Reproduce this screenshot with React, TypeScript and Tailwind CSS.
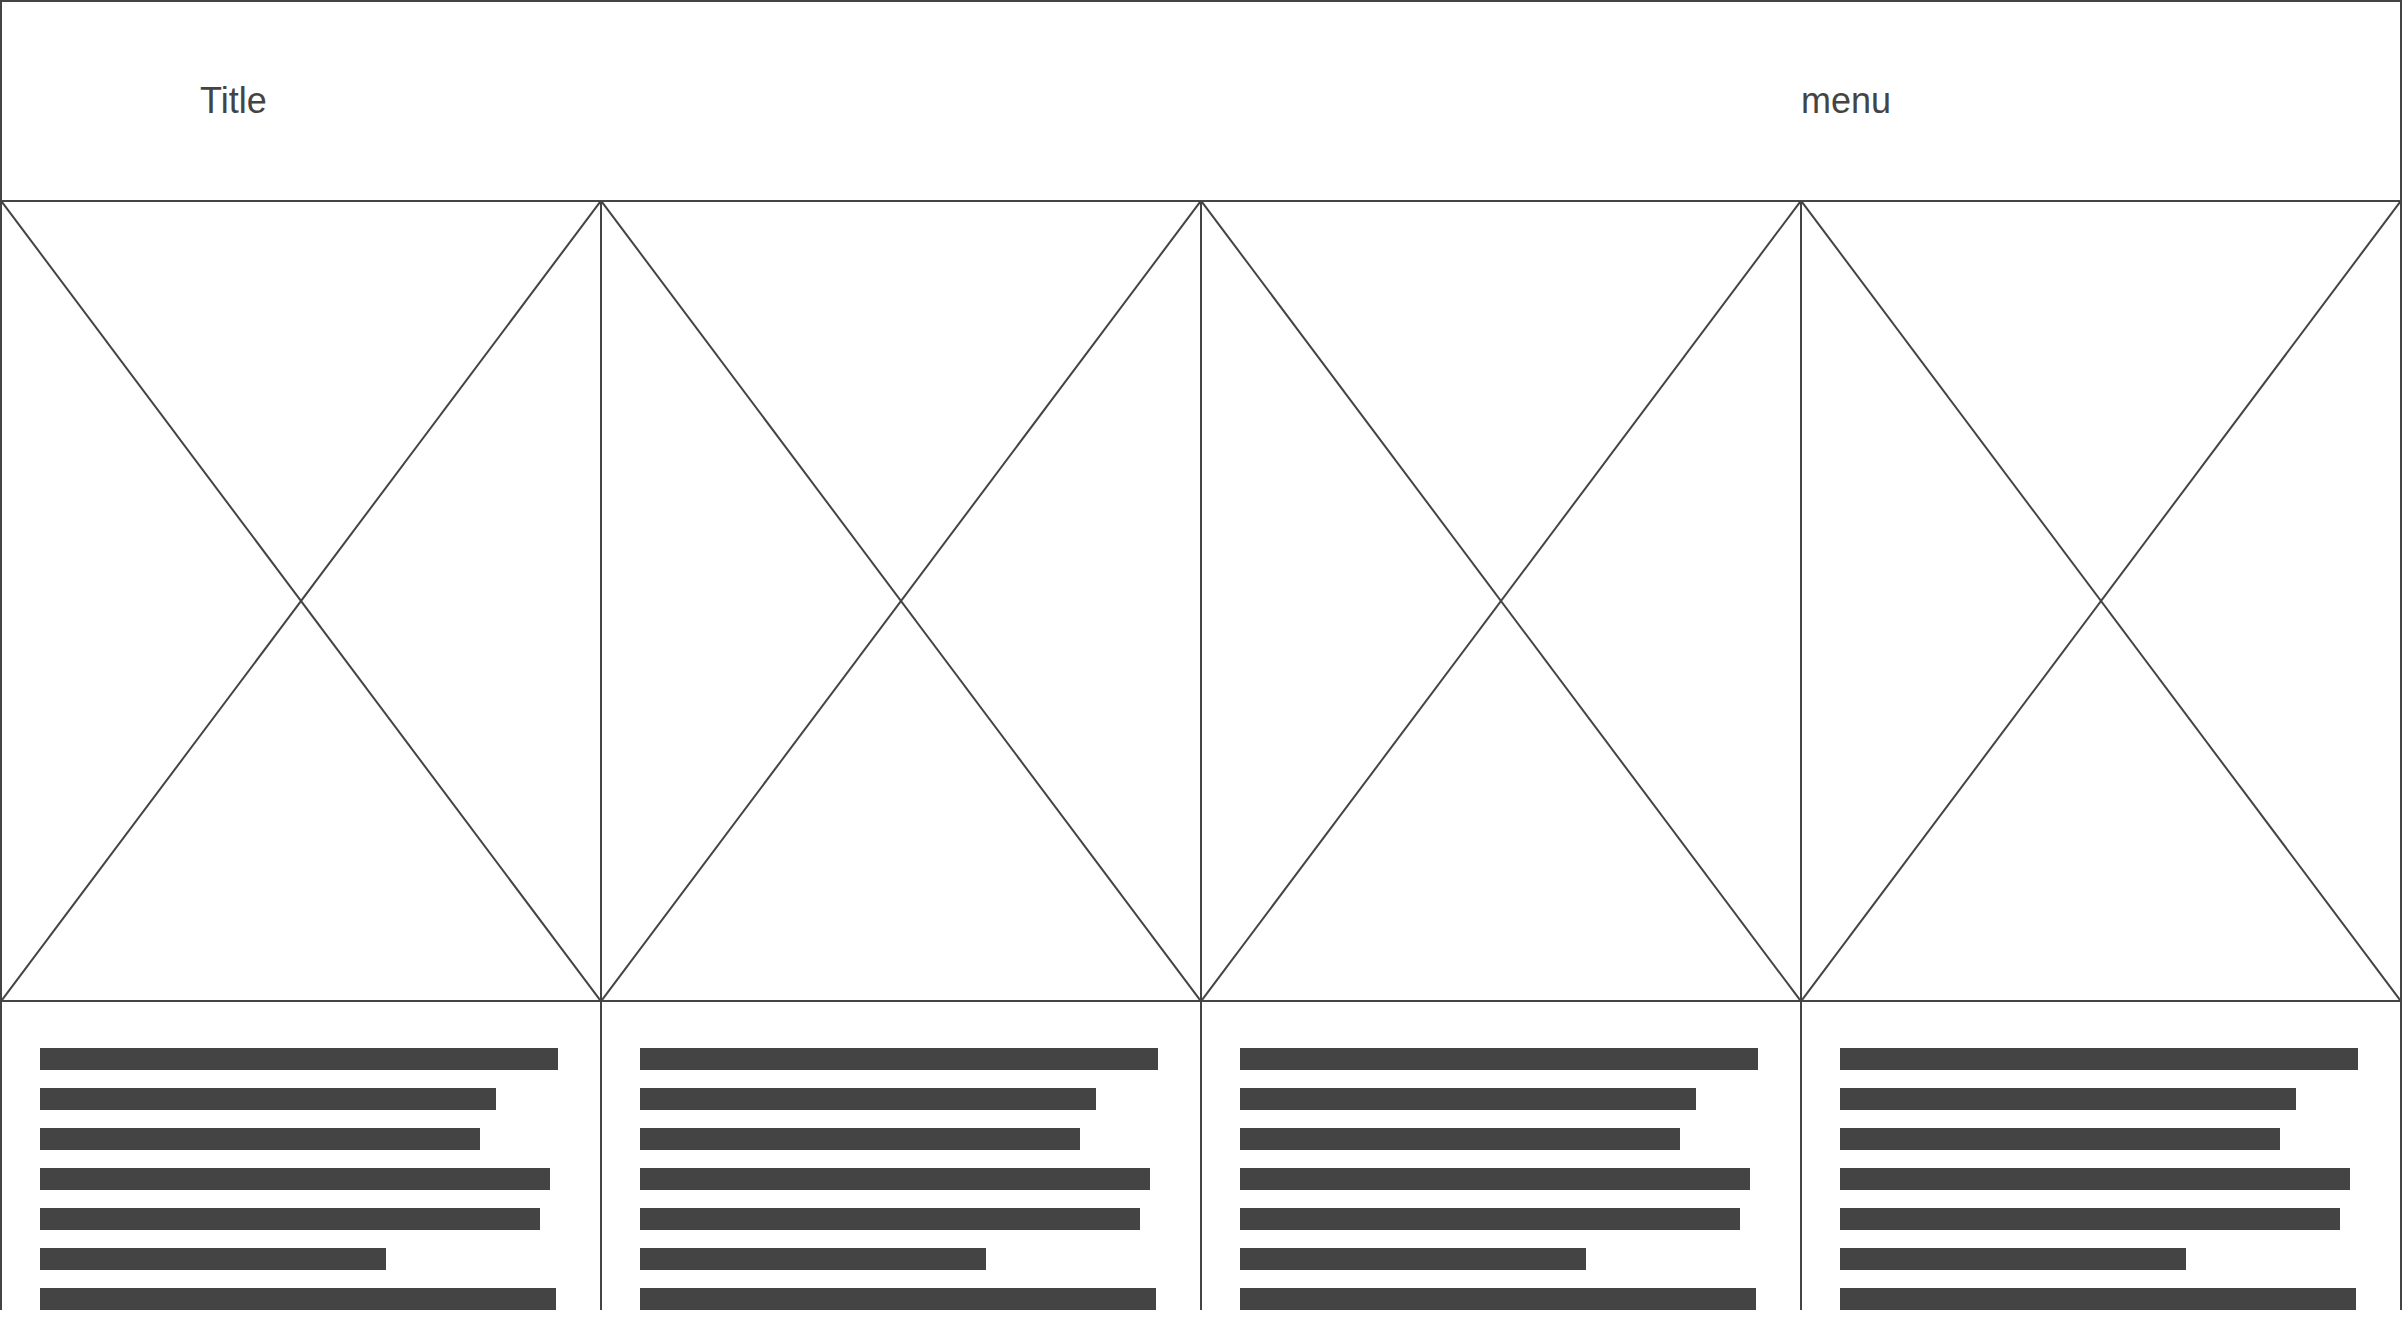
import React from 'react';

const barWidths = [518, 456, 440, 510, 500, 346, 516];

const Placeholder: React.FC = () => (
  <svg className="block w-full h-full" viewBox="0 0 100 100" preserveAspectRatio="none">
    <line x1="0" y1="0" x2="100" y2="100" stroke="#444444" strokeWidth="2" vectorEffect="non-scaling-stroke" />
    <line x1="100" y1="0" x2="0" y2="100" stroke="#444444" strokeWidth="2" vectorEffect="non-scaling-stroke" />
  </svg>
);

const Column: React.FC<{ last?: boolean }> = ({ last }) => (
  <div className={`flex flex-col border-l-2 border-[#444444] ${last ? 'border-r-2' : ''}`}>
    <div className="h-[800px] border-b-2 border-[#444444]">
      <Placeholder />
    </div>
    <div className="flex flex-col gap-[18px] pl-[38px] pt-[46px]">
      {barWidths.map((w, i) => (
        <div key={i} className="h-[22px] bg-[#444444]" style={{ width: w }} />
      ))}
    </div>
  </div>
);

export default function App() {
  return (
    <div className="w-[2402px] h-[1328px] overflow-hidden bg-white font-['Liberation_Sans',Arial,sans-serif] text-[#444444]">
      <header className="flex h-[202px] items-center border-2 border-[#444444]">
        <div className="w-[1799px] pl-[198px] text-[36px] leading-[40px]">Title</div>
        <div className="text-[36px] leading-[40px]">menu</div>
      </header>
      <div className="grid grid-cols-[600px_600px_600px_602px]">
        <Column />
        <Column />
        <Column />
        <Column last />
      </div>
    </div>
  );
}
